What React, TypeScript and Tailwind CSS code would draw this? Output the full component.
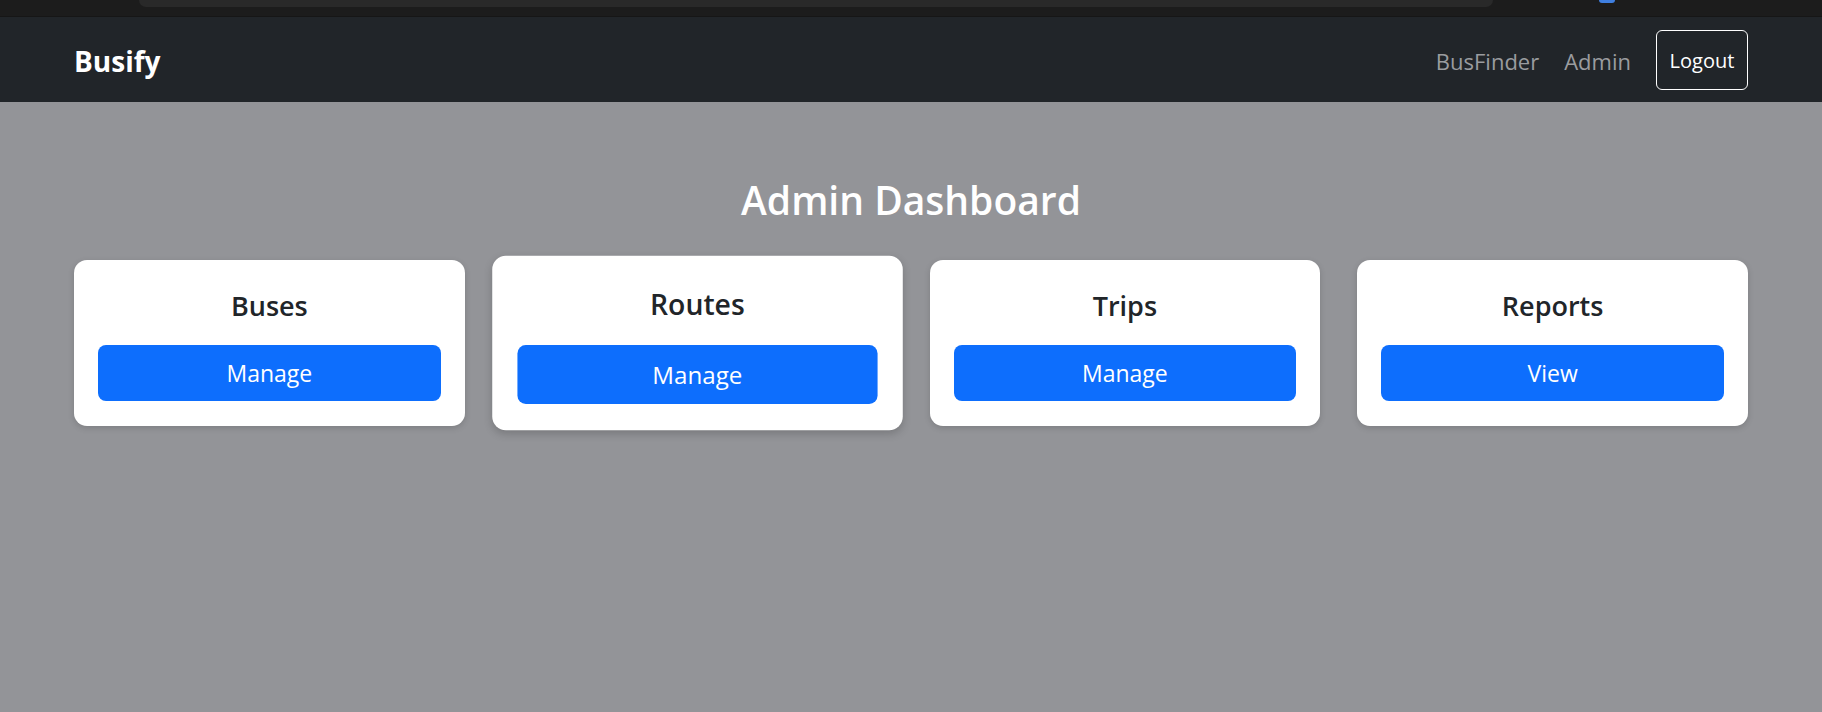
const cards = [
  { title: "Buses", action: "Manage" },
  { title: "Routes", action: "Manage", active: true },
  { title: "Trips", action: "Manage" },
  { title: "Reports", action: "View" },
]

function TopStrip() {
  return (
    <div className="relative h-[17px] bg-[#1c1c1c] border-b border-[#161616]">
      <div className="ml-[139px] h-[7px] w-[1354px] rounded-b-[10px] bg-[#292929]" />
      <div className="absolute left-[1599px] top-0 h-[3px] w-[16px] rounded-b-[4px] bg-[#3f7fe0]" />
    </div>
  )
}

function Navbar() {
  return (
    <nav className="flex h-[85px] items-center justify-between bg-[#212529] px-[74px]">
      <span className="pt-[3px] text-[28px] font-bold text-white">Busify</span>
      <div className="flex items-center gap-[25px] text-[22px]">
        <a className="pt-[3px] text-[#9a9c9f]">BusFinder</a>
        <a className="pt-[3px] text-[#9a9c9f]">Admin</a>
        <button className="flex h-[60px] w-[92px] items-center justify-center rounded-[6px] border border-white pt-[2px] text-[20px] text-white">
          Logout
        </button>
      </div>
    </nav>
  )
}

export default function App() {
  return (
    <div
      className="h-[712px] w-full overflow-hidden bg-[#939498]"
      style={{ fontFamily: '"Segoe UI", "Open Sans", "Noto Sans", sans-serif' }}
    >
      <TopStrip />
      <Navbar />
      <main className="px-[74px] pt-[75px]">
        <h2 className="text-center text-[39px] font-semibold leading-[1.2] text-white">
          Admin Dashboard
        </h2>
        <div className="mt-[36px] grid grid-cols-4 gap-[37px]">
          {cards.map((card) => (
            <div
              key={card.title}
              className={
                card.active
                  ? "flex h-[166px] scale-[1.05] flex-col items-center rounded-[13px] bg-white px-6 pt-[30px] shadow-[0_3px_8px_rgba(0,0,0,0.18)]"
                  : "flex h-[166px] flex-col items-center rounded-[13px] bg-white px-6 pt-[30px] shadow-[0_2px_6px_rgba(0,0,0,0.15)]"
              }
            >
              <h5 className="text-[27px] font-semibold leading-[1.2] text-[#212529]">
                {card.title}
              </h5>
              <button className="mt-[23px] h-[56px] w-full rounded-[8px] bg-[#0d6efd] text-[23px] text-white">
                {card.action}
              </button>
            </div>
          ))}
        </div>
      </main>
    </div>
  )
}
